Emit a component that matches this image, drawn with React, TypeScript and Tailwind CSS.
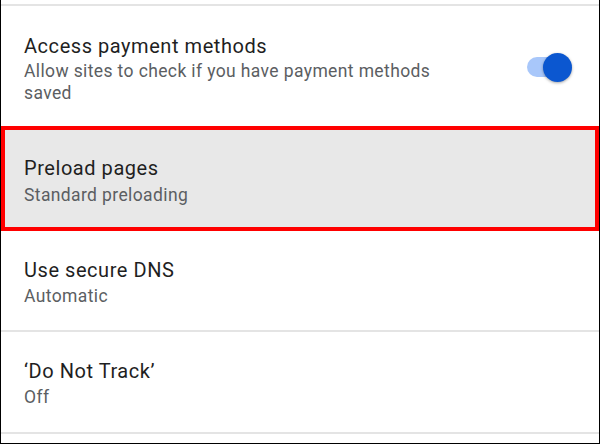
import React from "react";

function Toggle() {
  return (
    <div className="relative w-[45px] h-[29px] shrink-0">
      <div className="absolute left-0 top-[4px] w-[42px] h-[20px] rounded-full bg-[#a8c7fa]" />
      <div className="absolute left-[16px] top-0 w-[29px] h-[29px] rounded-full bg-[#0b57d0] shadow-[0_1px_3px_rgba(0,0,0,0.35)]" />
    </div>
  );
}

function Divider() {
  return <div className="h-[2px] bg-[#e4e4e4]" />;
}

export default function App() {
  const title = "text-[20px] leading-[28px] tracking-[0.55px] text-[#1f1f1f]";
  const sub = "text-[17.5px] leading-[22px] tracking-[0.38px] text-[#5b5e62]";
  return (
    <div
      className="w-[600px] h-[444px] bg-white border-l border-r border-b border-black flex flex-col overflow-hidden"
      style={{ fontFamily: "Roboto, 'Noto Sans', sans-serif" }}
    >
      <div className="h-[4px]" />
      <Divider />
      <div className="flex items-center pl-[23px] pr-[27px] pt-[26px] pb-[22px] h-[120px]">
        <div className="w-[445px] self-start">
          <div className={title}>Access payment methods</div>
          <div className={sub}>Allow sites to check if you have payment methods saved</div>
        </div>
        <div className="flex-1" />
        <div className="-mt-[2px]">
          <Toggle />
        </div>
      </div>
      <div className="h-[105px] border-4 border-[#ff0000] bg-[#e8e8e8] pl-[19px] pt-[24px]">
        <div className={title}>Preload pages</div>
        <div className={`${sub} mt-[2px]`}>Standard preloading</div>
      </div>
      <div className="h-[99px] pl-[23px] pt-[25px]">
        <div className={title}>Use secure DNS</div>
        <div className={`${sub} mt-[1px]`}>Automatic</div>
      </div>
      <Divider />
      <div className="h-[100px] pl-[23px] pt-[25px]">
        <div className={title}>‘Do Not Track’</div>
        <div className={`${sub} mt-[1px]`}>Off</div>
      </div>
      <Divider />
    </div>
  );
}
